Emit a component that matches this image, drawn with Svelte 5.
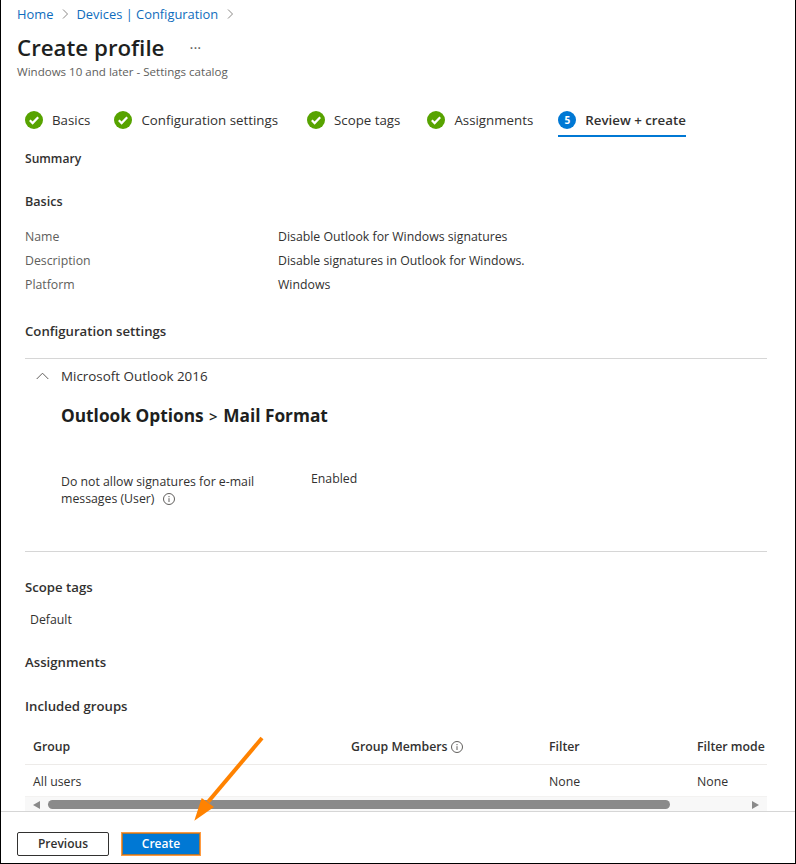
<script lang="ts">
  const tabs = ["Basics", "Configuration settings", "Scope tags", "Assignments"];
  const basics = [
    ["Name", "Disable Outlook for Windows signatures"],
    ["Description", "Disable signatures in Outlook for Windows."],
    ["Platform", "Windows"],
  ];
</script>

<div class="page">
  <nav class="crumbs">
    <span>Home</span>
    <svg class="chev" width="8" height="10" viewBox="0 0 8 10"><path d="M2 .5 6.500 5 2 9.500" /></svg>
    <span>Devices | Configuration</span>
    <svg class="chev" width="8" height="10" viewBox="0 0 8 10"><path d="M2 .5 6.500 5 2 9.500" /></svg>
  </nav>

  <header class="head">
    <h1>Create profile</h1>
    <span class="dots">···</span>
  </header>
  <p class="sub">Windows 10 and later - Settings catalog</p>

  <div class="tabs">
    {#each tabs as tab}
      <div class="tab">
        <svg width="18" height="18" viewBox="0 0 18 18">
          <circle cx="9" cy="9" r="9" fill="#57a300" />
          <path d="M4.800 9.300 7.600 12.100 13.200 6.200" fill="none" stroke="#fff" stroke-width="2.200" />
        </svg>
        <span>{tab}</span>
      </div>
    {/each}
    <div class="tab active">
      <span class="num">5</span>
      <span>Review + create</span>
    </div>
  </div>

  <main class="content">
    <h2 class="summary">Summary</h2>
    <h2 class="basics">Basics</h2>
    <dl class="rows">
      {#each basics as row}
        <dt>{row[0]}</dt>
        <dd>{row[1]}</dd>
      {/each}
    </dl>

    <h2 class="config">Configuration settings</h2>
    <section class="settings">
      <div class="product">
        <svg width="13" height="8" viewBox="0 0 13 8"><path d="M.7 7 6.500 1.200 12.300 7" /></svg>
        <span>Microsoft Outlook 2016</span>
      </div>
      <h3>Outlook Options <span class="gt">&gt;</span> Mail Format</h3>
      <div class="setting">
        <div class="setting-name">
          Do not allow signatures for e-mail messages (User)
          <svg class="info" width="12" height="12" viewBox="0 0 12 12">
            <circle cx="6" cy="6" r="5.500" />
            <path d="M6 5.200V9M6 3v1.200" />
          </svg>
        </div>
        <div class="setting-value">Enabled</div>
      </div>
    </section>

    <h2 class="scope">Scope tags</h2>
    <p class="default">Default</p>
    <h2 class="assign">Assignments</h2>
    <h2 class="groups">Included groups</h2>

    <div class="table">
      <div class="tr th">
        <span>Group</span>
        <span class="members">
          Group Members
          <svg class="info" width="12" height="12" viewBox="0 0 12 12">
            <circle cx="6" cy="6" r="5.500" />
            <path d="M6 5.200V9M6 3v1.200" />
          </svg>
        </span>
        <span>Filter</span>
        <span>Filter mode</span>
      </div>
      <div class="tr td">
        <span>All users</span>
        <span></span>
        <span>None</span>
        <span>None</span>
      </div>
      <div class="scrollbar">
        <span class="arrow left"></span>
        <span class="thumb"></span>
        <span class="arrow right"></span>
      </div>
    </div>
  </main>

  <footer class="foot">
    <button class="prev">Previous</button>
    <button class="create">Create</button>
  </footer>

  <svg class="callout" width="90" height="100" viewBox="0 0 90 100">
    <path d="M82 9 28 73" fill="none" stroke="#ff8200" stroke-width="4" />
    <path d="M14.300 91.700 21.700 69 34 78Z" fill="#ff8200" />
  </svg>
</div>

<style>
  :global(body) {
    margin: 0;
    background: #fff;
  }
  .page {
    position: relative;
    box-sizing: border-box;
    width: 796px;
    height: 864px;
    border: 1px solid #000;
    border-top: 0;
    font-family: "Open Sans", "Liberation Sans", sans-serif;
    font-size: 12.300px;
    color: #323130;
    overflow: hidden;
  }
  .crumbs {
    display: flex;
    align-items: center;
    gap: 7.500px;
    height: 28px;
    padding-left: 16px;
    color: #0f6cbd;
    font-size: 12.900px;
  }
  .chev path {
    fill: none;
    stroke: #8a8886;
    stroke-width: 1;
  }
  .head {
    display: flex;
    align-items: center;
    height: 34px;
    margin-top: 2px;
    padding-left: 16px;
  }
  h1 {
    margin: 0;
    font-size: 22.300px;
    font-weight: 600;
    color: #201f1e;
  }
  .dots {
    margin-left: 25px;
    font-size: 15px;
    color: #605e5c;
  }
  .sub {
    margin: 0;
    padding-left: 16px;
    height: 16px;
    line-height: 16px;
    font-size: 11.550px;
    color: #605e5c;
  }
  .tabs {
    display: flex;
    gap: 25px;
    margin-top: 22px;
    padding-left: 24px;
    height: 47px;
  }
  .tab {
    display: flex;
    align-items: center;
    gap: 9px;
    box-sizing: border-box;
    height: 35px;
    padding-top: 2px;
    border-bottom: 2px solid transparent;
    font-size: 13.300px;
  }
  .tab:nth-child(2) {
    margin-left: -1px;
  }
  .tab:nth-child(3) {
    margin-left: 4px;
  }
  .tab:nth-child(4) {
    margin-left: 2px;
  }
  .tab.active {
    font-weight: 600;
    border-bottom-color: #0078d4;
  }
  .num {
    width: 18px;
    height: 18px;
    border-radius: 50%;
    background: #0078d4;
    color: #fff;
    font-size: 10px;
    font-weight: 700;
    line-height: 18px;
    text-align: center;
  }
  .content {
    padding: 1px 28px 0 24px;
  }
  h2 {
    margin: 0;
    font-size: 13.200px;
    font-weight: 600;
    line-height: 18px;
  }
  .summary {
    font-size: 12.100px;
  }
  .basics {
    margin-top: 25px;
    font-size: 12.600px;
  }
  .rows {
    display: grid;
    grid-template-columns: 253px 1fr;
    grid-auto-rows: 24px;
    align-items: center;
    margin: 13px 0 0;
  }
  dt {
    color: #605e5c;
  }
  dd {
    margin: 0;
  }
  .config {
    margin-top: 26px;
  }
  .settings {
    margin-top: 18px;
    height: 194px;
    box-sizing: border-box;
    border-top: 1px solid #d6d6d6;
    border-bottom: 1px solid #d6d6d6;
  }
  .product {
    display: flex;
    align-items: center;
    gap: 12px;
    height: 34px;
    padding-left: 11px;
    font-size: 13.400px;
  }
  .product path {
    fill: none;
    stroke: #605e5c;
    stroke-width: 1;
  }
  h3 {
    margin: 11px 0 0 36px;
    font-size: 17.300px;
    line-height: 24px;
    font-weight: 700;
    color: #201f1e;
  }
  .gt {
    margin: 0 1px;
    font-size: 15px;
    font-weight: 600;
  }
  .setting {
    display: flex;
    margin: 42px 0 0 36px;
  }
  .setting-name {
    width: 205px;
    margin-right: 45px;
    line-height: 17px;
    padding-top: 3px;
  }
  .info {
    margin-left: 5px;
    vertical-align: -2px;
  }
  .info circle,
  .info path {
    fill: none;
    stroke: #605e5c;
    stroke-width: 1;
  }
  .setting-value {
    line-height: 17px;
  }
  .scope {
    margin-top: 26px;
  }
  .default {
    margin: 15px 0 0 5px;
    line-height: 18px;
  }
  .assign {
    margin-top: 24px;
  }
  .groups {
    margin-top: 26px;
  }
  .table {
    margin-top: 13px;
  }
  .tr {
    display: grid;
    grid-template-columns: 318px 198px 148px 1fr;
    align-items: center;
    padding-left: 8px;
    border-bottom: 1px solid #edebe9;
  }
  .th {
    height: 36px;
    font-weight: 600;
  }
  .members .info {
    margin-left: 0;
  }
  .td {
    height: 30px;
    padding-top: 1px;
    border-bottom-color: #f3f2f1;
  }
  .scrollbar {
    display: flex;
    align-items: center;
    box-sizing: border-box;
    height: 14px;
    background: #f8f8f8;
    padding: 1px 8px 0;
  }
  .arrow {
    width: 0;
    height: 0;
    border-top: 4px solid transparent;
    border-bottom: 4px solid transparent;
  }
  .arrow.left {
    border-right: 7px solid #8a8a8a;
  }
  .arrow.right {
    border-left: 7px solid #8a8a8a;
  }
  .thumb {
    width: 622px;
    height: 9px;
    margin: 0 auto 0 8px;
    border-radius: 5px;
    background: #8a8a8a;
  }
  .foot {
    display: flex;
    gap: 12px;
    padding: 20px 0 0 16px;
    border-top: 1px solid #d6d6d6;
  }
  button {
    height: 24px;
    box-sizing: border-box;
    padding: 0 0 2px;
    font: 600 12px "Open Sans", "Liberation Sans", sans-serif;
    border-radius: 2px;
  }
  .prev {
    width: 92px;
    background: #fff;
    border: 1px solid #323130;
    color: #323130;
  }
  .create {
    width: 80px;
    background: #0078d4;
    border: 1px solid #ff9a40;
    box-shadow: inset 0 0 0 1px #a9773a;
    border-radius: 0;
    color: #fff;
  }
  .callout {
    position: absolute;
    left: 179px;
    top: 729px;
  }
</style>
